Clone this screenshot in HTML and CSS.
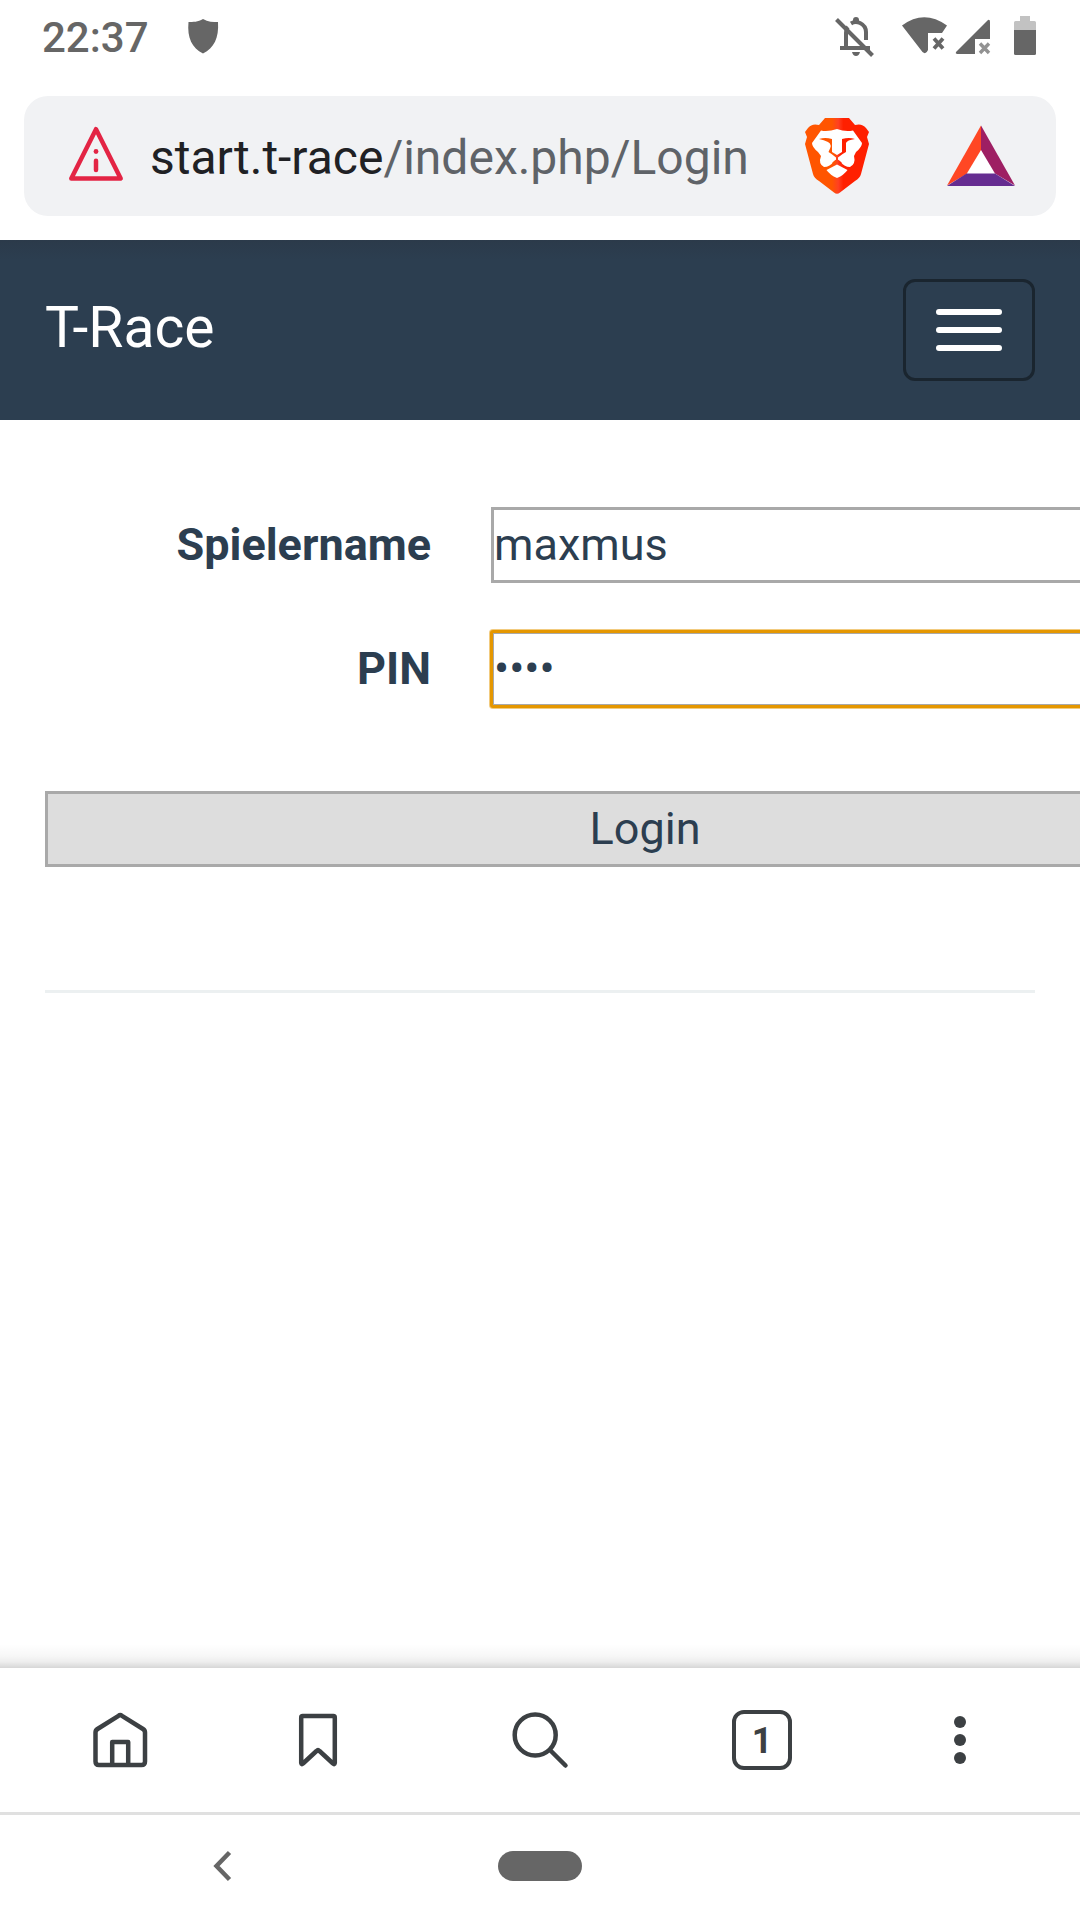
FILE: index.html
```html
<!DOCTYPE html>
<html lang="de">
<head>
<meta charset="utf-8">
<title>T-Race</title>
<link rel="stylesheet" href="styles.css">
</head>
<body>
<div class="screen">
  <header class="status">
    <span class="clock">22:37</span>
    <svg class="shield" width="32" height="36" viewBox="187 18 32 36"><path d="M203 19 C198 22 193 22 188.500 22 C187 38 192 48 203 53.500 C214 48 219 38 218 22 C213 22 208 22 203 19Z" fill="#666"/></svg>
    <svg class="system" width="210" height="48" viewBox="830 12 210 48">
      <g fill="none" stroke="#666" stroke-width="4">
        <path d="M840 48H870M846 47V33Q846 29 848 27M851 23.500Q855 21 860 23Q866 26 866 32V40"/>
        <path d="M836.500 19.500L872.500 55.500"/>
      </g>
      <path d="M853 23V20Q853 17 856 17Q859 17 859 20V23Z" fill="#666"/>
      <path d="M852 52H860Q859 56 856 56Q853 56 852 52Z" fill="#666"/>
      <path d="M902 25.500Q924 9 947 25.500L942 33H928V50Q926 55 922.500 52Z" fill="#666"/>
      <path d="M934 38.500L943 48.500M943 38.500L934 48.500" stroke="#666" stroke-width="3.800"/>
      <path d="M956 52L988 20Q990 19 990 22V39H975V54H957Q955 53.500 956 52Z" fill="#666"/>
      <path d="M980 43.500L989 53M989 43.500L980 53" stroke="#929292" stroke-width="3.400"/>
      <path d="M1014 30V22.500Q1014 21 1015.500 21H1020V16H1030V21H1034.500Q1036 21 1036 22.500V30Z" fill="#c2c2c2"/>
      <path d="M1014 30H1036V53.500Q1036 55 1034.500 55H1015.500Q1014 55 1014 53.500Z" fill="#666"/>
    </svg>
  </header>

  <div class="address">
    <svg class="warning" width="56" height="56" viewBox="0 0 56 56">
      <path d="M28 4.200L52.700 53.500H3.300Z" fill="none" stroke="#e32444" stroke-width="4.500" stroke-linejoin="round"/>
      <circle cx="28" cy="26.500" r="2.400" fill="#e32444"/>
      <path d="M28 35.700V45" stroke="#e32444" stroke-width="4.500" stroke-linecap="round"/>
    </svg>
    <span class="url">start.t-race<span class="path">/index.php/Login</span></span>
    <svg class="lion" width="66" height="78" viewBox="0 0 66 78">
      <defs><linearGradient id="mane"><stop offset="0" stop-color="#ff5500"/><stop offset=".42" stop-color="#ff5500"/><stop offset=".52" stop-color="#ff4022"/><stop offset=".6" stop-color="#ff2000"/><stop offset="1" stop-color="#ff2000"/></linearGradient></defs>
      <path d="M21 1H45L51 8Q58 6 62 11L65 15L63 20L65 27L57 57Q56 61 51 64L36 75.500Q33 78 30 75.500L15 64Q10 61 9 57L1 27L3 20L1 15L4 11Q8 6 15 8Z" fill="url(#mane)"/>
      <path d="M17 13.500Q24 15 33 12Q41 15 49 13.500L58 26Q58 30 52 35L50 39Q52 47 46 50Q40 50 36 44L33 42L30 44Q26 50 20 50Q14 47 17 39L14 35Q8 30 8 26Z" fill="#fff"/>
      <path d="M15 22Q21 20 28 22V35L33 38L38 35V22Q45 20 51 22Q43 23 42 26L42 35Q38 37 34 40.500V43L38 46L33 48L28 46L32 43V40.500Q28 37 24.500 35Q29 27 24 25Q20 23 15 22Z" fill="url(#mane)"/>
      <path d="M33 47.500L43.500 53Q40 58 33 61Q26 58 22.500 53Z" fill="#fff"/>
    </svg>
    <svg class="bat" width="70" height="62" viewBox="0 0 70 62">
      <path d="M35 24L49 49H21Z" fill="#fff"/>
      <path d="M35 .5V25L20.500 49L1 60.500Z" fill="#ff4724"/>
      <path d="M35 .5L69 60.500L49 48.500L35 25Z" fill="#9e1f63"/>
      <path d="M1 61L20.500 48.500H49L69 61Z" fill="#662d91"/>
    </svg>
  </div>

  <nav class="navbar">
    <span class="brand">T-Race</span>
    <button class="toggler" type="button" aria-label="Menü"><span class="bar"></span><span class="bar"></span><span class="bar"></span></button>
  </nav>

  <main class="content">
    <div class="row"><label class="label" for="name">Spielername</label><input class="field" id="name" value="maxmus"></div>
    <div class="row"><label class="label" for="pin">PIN</label><input class="field field-active" id="pin" type="password" value="1234"></div>
    <button class="login" type="submit">Login</button>
    <hr class="divider">
  </main>

  <footer class="toolbar">
    <svg width="60" height="60" viewBox="90 1710 60 60" class="line-icon"><path d="M118.500 1715.800Q120.200 1714.500 122 1715.800L143 1729Q145 1730.300 145 1732.500V1761.500Q145 1765 141.500 1765H99Q95.500 1765 95.500 1761.500V1732.500Q95.500 1730.300 97.500 1729ZM112.200 1765V1742H128.200V1765"/></svg>
    <svg width="60" height="60" viewBox="288 1710 60 60" class="line-icon"><path d="M301.200 1717.500Q301.200 1716 302.700 1716H333.300Q334.800 1716 334.800 1717.500V1763Q334.500 1765 333 1763.500L319.500 1751Q318 1749.500 316.500 1751L303 1763.500Q301.500 1765 301.200 1763Z"/></svg>
    <svg width="60" height="60" viewBox="510 1710 60 60" class="line-icon"><circle cx="535.200" cy="1735" r="20.500"/><path d="M550.500 1750.500L565.500 1765.500"/></svg>
    <span class="tabs">1</span>
    <svg width="60" height="60" viewBox="0 0 60 60" fill="#3c4043"><circle cx="30" cy="12" r="6"/><circle cx="30" cy="30" r="6"/><circle cx="30" cy="48" r="6"/></svg>
  </footer>

  <div class="system-nav">
    <svg width="20" height="34" viewBox="0 0 20 34"><path d="M16.500 3.500L3.500 17L16.500 30.500" fill="none" stroke="#666" stroke-width="4.500"/></svg>
    <span class="pill"></span>
  </div>
</div>
</body>
</html>
```
FILE: styles.css
```css
* { box-sizing: border-box; }
body { margin: 0; font-family: Roboto, "Liberation Sans", sans-serif; background: #fff; color: #2c3e50; }
svg { display: block; flex: none; }
.screen { width: 1080px; height: 1920px; overflow: hidden; display: flex; flex-direction: column; }

.status { height: 96px; flex: none; display: flex; padding: 12px 40px 0 42px; }
.clock { width: 145px; padding-top: 1px; font-size: 42px; line-height: 50px; font-weight: 500; color: #666; }
.shield { margin-top: 6px; }
.system { margin-left: auto; }

.address { height: 120px; flex: none; margin: 0 24px 24px; padding: 0 40px 0 44px; display: flex; align-items: center; background: #f1f2f4; border-radius: 24px; }
.warning { margin-top: -6px; }
.url { flex: 1; padding: 4px 0 0 26px; font-size: 48px; line-height: 60px; color: #202124; white-space: nowrap; }
.path { color: #5f6368; }
.lion { margin-right: 76px; }
.bat { margin-top: -1px; }

.navbar { height: 180px; flex: none; padding: 0 45px; display: flex; align-items: center; justify-content: space-between; background: linear-gradient(#2b3a4a, #2c3e50 20px); }
.brand { font-size: 57px; line-height: 84px; color: #fff; padding-bottom: 5px; }
.toggler { width: 132px; height: 102px; padding: 0; border: 3px solid #1a252f; border-radius: 12px; background: none; display: flex; flex-direction: column; align-items: center; justify-content: center; gap: 12px; }
.bar { width: 66px; height: 6px; border-radius: 3px; background: #fff; }

.content { flex: 1; padding: 87px 45px 0; }
.row { display: flex; align-items: center; height: 76px; margin-bottom: 48px; }
.label { width: 386px; flex: none; text-align: right; font-size: 45px; font-weight: 700; line-height: 68px; }
.field { width: 754px; height: 76px; flex: none; margin-left: 60px; padding: 0 0 2px; border: 3px solid #a9a9a9; border-radius: 0; background: #fff; font: 45px Roboto, "Liberation Sans", sans-serif; color: #2c3e50; outline: none; }
.field-active { outline: 3px solid #e59700; outline-offset: -2px; border-radius: 2px; box-shadow: 0 0 0 2px rgba(229, 151, 0, .5); }
.login { display: block; width: 1200px; height: 76px; margin-top: 84px; padding: 0 0 2px; border: 3px solid #a9a9a9; background: #ddd; font: 45px Roboto, "Liberation Sans", sans-serif; color: #2c3e50; }
.divider { height: 3px; margin: 123px 0 0; border: 0; background: #ecf0f1; }

.toolbar { height: 147px; flex: none; position: relative; display: grid; grid-template-columns: 240px 156px 288px 156px 240px; place-items: center; background: #fff; border-bottom: 3px solid #e0e0e0; }
.toolbar::before { content: ""; position: absolute; left: 0; right: 0; bottom: 100%; height: 24px; background: linear-gradient(rgba(0, 0, 0, 0), rgba(0, 0, 0, .03) 50%, rgba(0, 0, 0, .07) 75%, rgba(0, 0, 0, .16)); }
.line-icon { fill: none; stroke: #3c4043; stroke-width: 4.5; stroke-linecap: round; stroke-linejoin: round; }
.tabs { width: 60px; height: 60px; border: 4.5px solid #3c4043; border-radius: 12px; font-size: 36px; font-weight: 700; line-height: 55px; text-align: center; color: #3c4043; }

.system-nav { height: 105px; flex: none; display: flex; align-items: center; padding: 0 0 3px 213px; background: #fff; }
.pill { width: 84px; height: 30px; margin-left: 265px; border-radius: 15px; background: #666; }
```
